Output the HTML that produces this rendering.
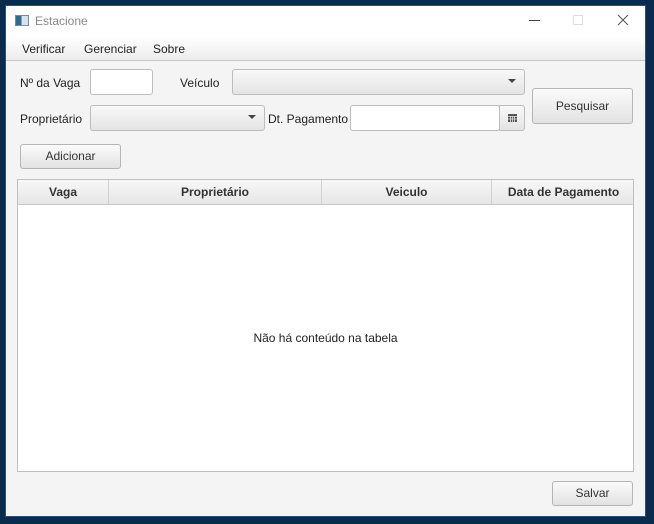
<!DOCTYPE html>
<html><head><meta charset="utf-8"><style>
*{box-sizing:border-box;margin:0;padding:0}
body{width:654px;height:524px;background:#0a2a4e;position:relative;overflow:hidden;font-family:"Liberation Sans",sans-serif;font-size:12px;color:#222}
.win{position:absolute;left:5px;top:5px;width:641px;height:512px;background:#f4f4f4;border:1px solid #2b4f7a}
.title{position:absolute;left:0;top:0;width:100%;height:31px;background:#fff}
.menu{position:absolute;left:0;top:31px;width:100%;height:24px;background:linear-gradient(#fff,#ececec);border-bottom:1px solid #c8c8c8}
.a{position:absolute;white-space:nowrap}
.btn{position:absolute;border:1px solid #b5b5b5;border-radius:3px;background:linear-gradient(#fbfbfb,#e2e2e2);text-align:center;font-size:12px;color:#333}
.tf{position:absolute;background:#fff;border:1px solid #bdbdbd;border-radius:3px}
.cb{position:absolute;border:1px solid #bdbdbd;border-radius:3px;background:linear-gradient(#f8f8f8,#e4e4e4)}
.arr{position:absolute;right:8px;top:9px;width:0;height:0;border-left:4px solid transparent;border-right:4px solid transparent;border-top:4px solid #444}
.tbl{position:absolute;left:11px;top:173px;width:617px;height:293px;background:#fff;border:1px solid #bfbfbf}
.hd{position:absolute;left:0;top:0;width:100%;height:25px;background:linear-gradient(#f7f7f7,#e6e6e6);border-bottom:1px solid #c8c8c8}
.hd div{position:absolute;top:0;height:24px;line-height:24px;text-align:center;font-weight:bold;font-size:12px;color:#333;border-right:1px solid #d0d0d0}
</style></head><body>
<div class="win">
<div class="title">
<div class="a" style="left:9px;top:9px;width:14px;height:11px;border:1px solid #7a8a9a;background:linear-gradient(90deg,#2f6a8f 0 45%,#d8e2ea 45%)"></div>
<div class="a" style="left:29px;top:8px;color:#888;font-size:12px">Estacione</div>
<div class="a" style="left:523px;top:14px;width:11px;height:1px;background:#444"></div>
<div class="a" style="left:567px;top:9px;width:10px;height:10px;border:1px solid #ddd"></div>
<svg class="a" style="left:611px;top:8px" width="12" height="12"><path d="M1 1L11 11M11 1L1 11" stroke="#555" stroke-width="1"/></svg>
</div>
<div class="menu">
<div class="a" style="left:16px;top:5px">Verificar</div>
<div class="a" style="left:78px;top:5px">Gerenciar</div>
<div class="a" style="left:147px;top:5px">Sobre</div>
</div>
<div class="a" style="left:14px;top:70px">Nº da Vaga</div>
<div class="tf" style="left:84px;top:63px;width:63px;height:26px"></div>
<div class="a" style="left:174px;top:70px">Veículo</div>
<div class="cb" style="left:226px;top:63px;width:293px;height:26px"><div class="arr"></div></div>
<div class="btn" style="left:526px;top:82px;width:101px;height:36px;line-height:34px">Pesquisar</div>
<div class="a" style="left:14px;top:106px">Proprietário</div>
<div class="cb" style="left:84px;top:99px;width:175px;height:26px"><div class="arr"></div></div>
<div class="a" style="left:262px;top:106px">Dt. Pagamento</div>
<div class="tf" style="left:344px;top:99px;width:150px;height:26px"></div>
<div class="cb" style="left:493px;top:99px;width:26px;height:26px;border-radius:0 3px 3px 0">
<svg class="a" style="left:8px;top:8px" width="9" height="8"><rect width="9" height="8" fill="#555"/><path d="M0 2.5H9M0 5H9M2.5 2V8M4.5 2V8M6.5 2V8" stroke="#ddd" stroke-width="0.8"/></svg></div>
<div class="btn" style="left:14px;top:138px;width:101px;height:25px;line-height:23px">Adicionar</div>
<div class="tbl">
<div class="hd">
<div style="left:0;width:91px">Vaga</div>
<div style="left:91px;width:213px">Proprietário</div>
<div style="left:304px;width:170px">Veiculo</div>
<div style="left:474px;width:143px;border-right:none">Data de Pagamento</div>
</div>
<div class="a" style="left:0;width:100%;top:151px;text-align:center">Não há conteúdo na tabela</div>
</div>
<div class="btn" style="left:546px;top:475px;width:81px;height:25px;line-height:23px">Salvar</div>
</div>
</body></html>
